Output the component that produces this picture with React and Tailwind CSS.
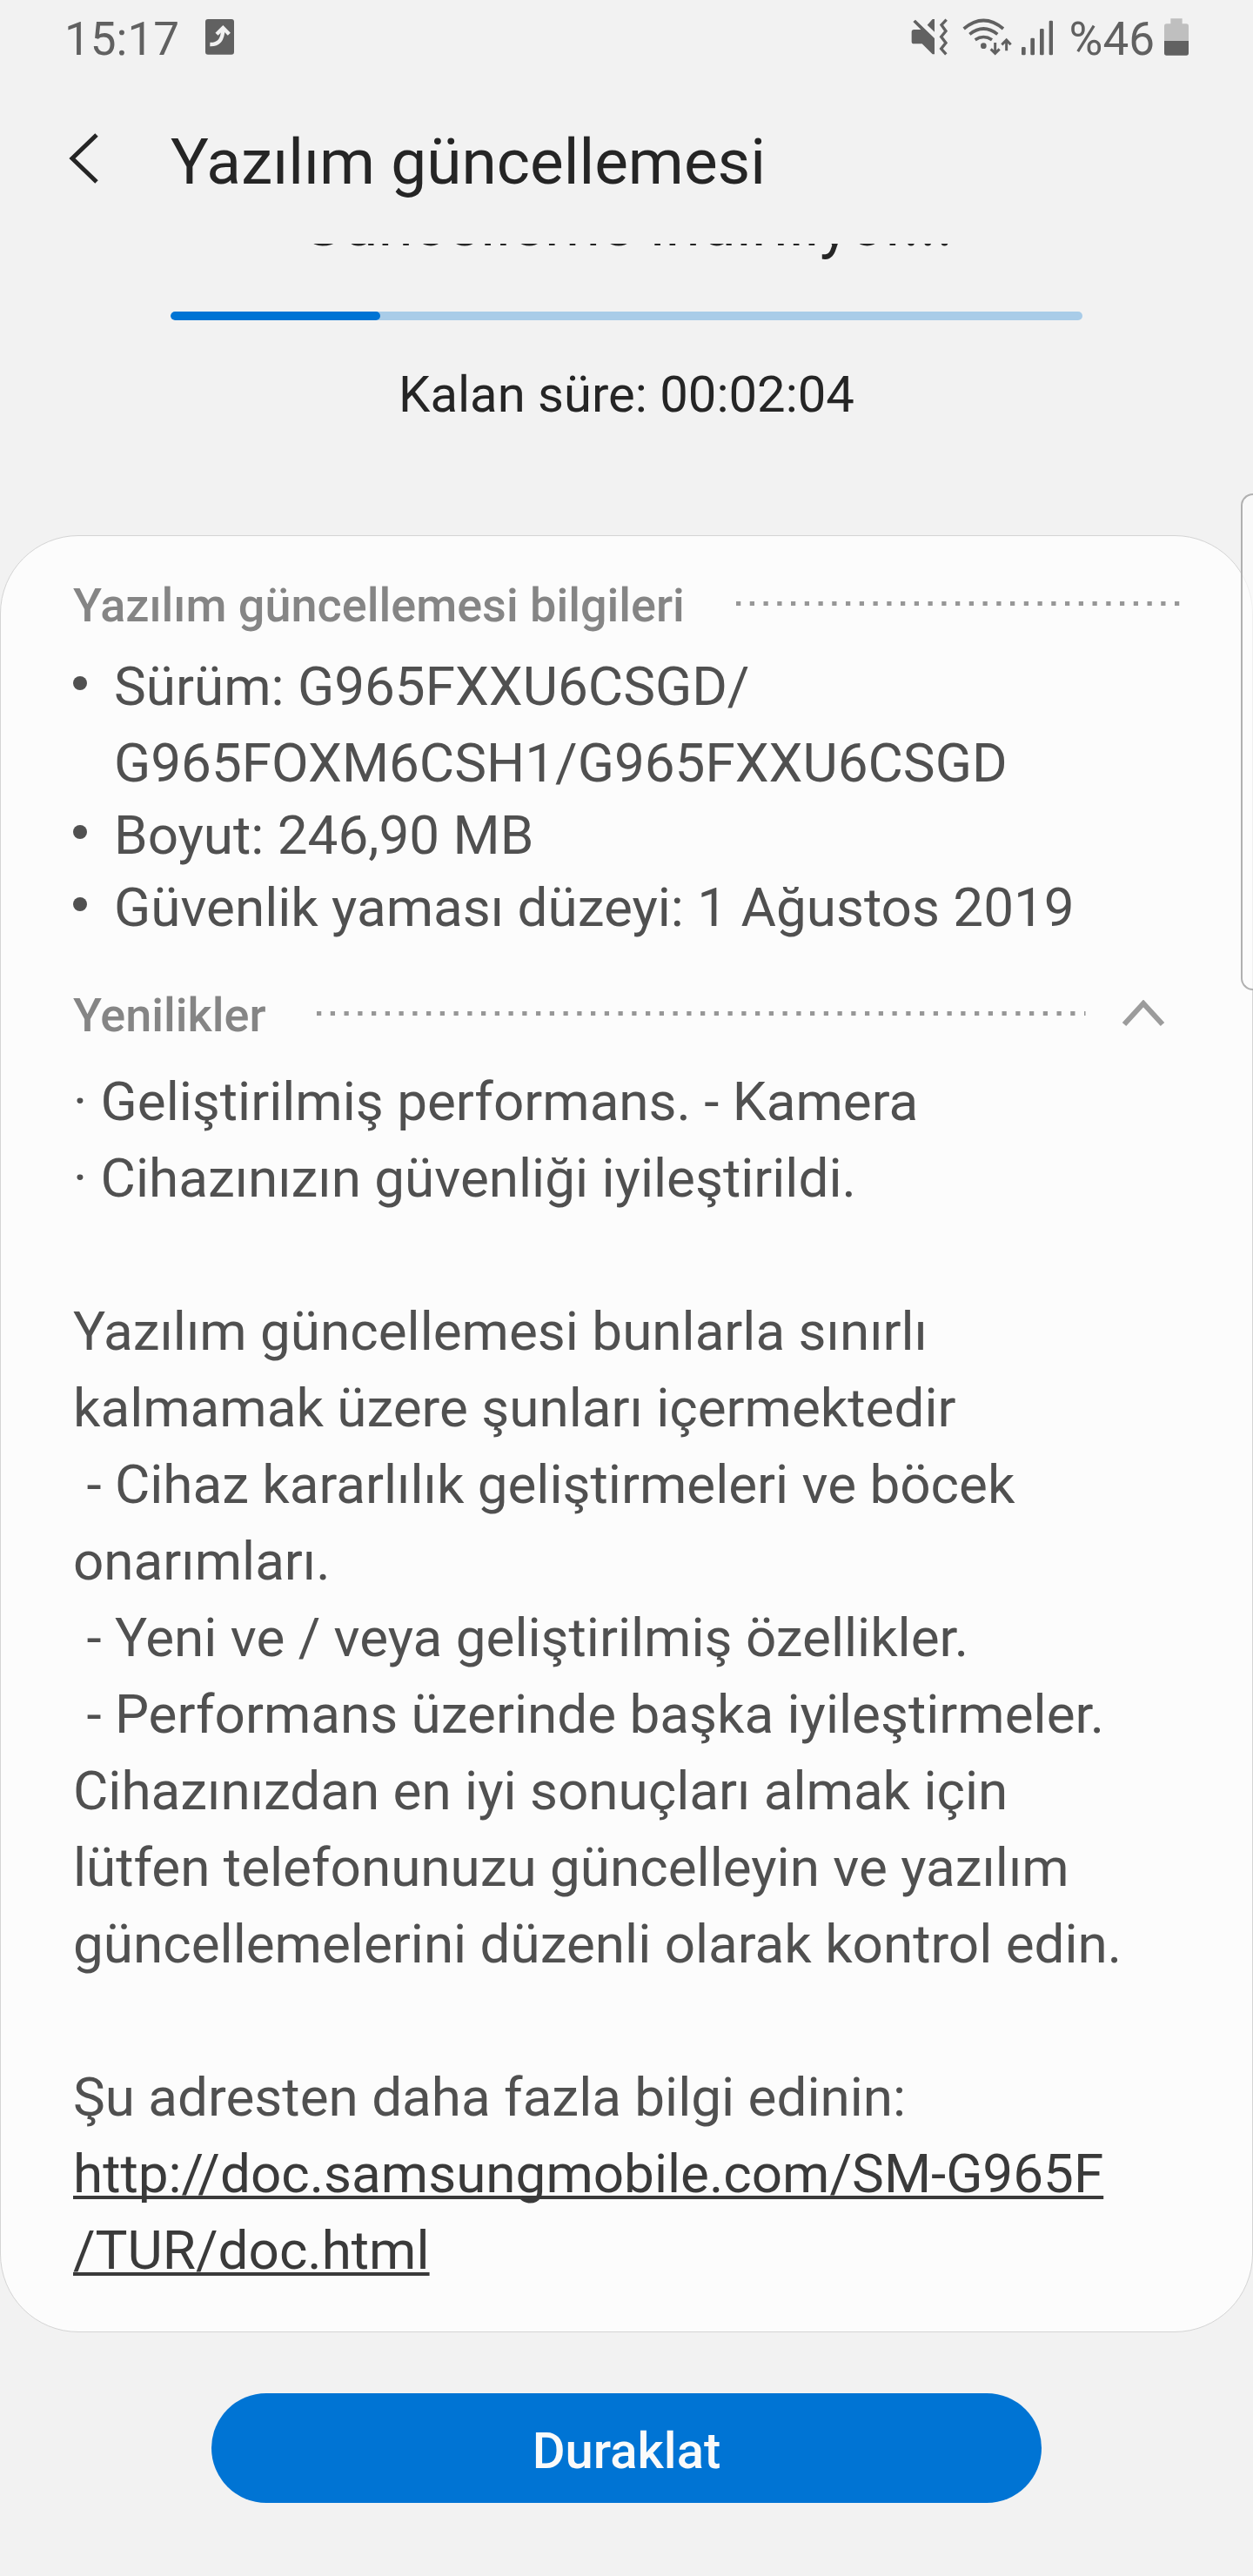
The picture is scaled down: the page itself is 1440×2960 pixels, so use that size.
import React, { useState } from 'react';

const details = [
  'Sürüm: G965FXXU6CSGD/ G965FOXM6CSH1/G965FXXU6CSGD',
  'Boyut: 246,90 MB',
  'Güvenlik yaması düzeyi: 1 Ağustos 2019',
];

const releaseNotes = `· Geliştirilmiş performans. - Kamera
· Cihazınızın güvenliği iyileştirildi.

Yazılım güncellemesi bunlarla sınırlı kalmamak üzere şunları içermektedir
 - Cihaz kararlılık geliştirmeleri ve böcek onarımları.
 - Yeni ve / veya geliştirilmiş özellikler.
 - Performans üzerinde başka iyileştirmeler.
Cihazınızdan en iyi sonuçları almak için lütfen telefonunuzu güncelleyin ve yazılım güncellemelerini düzenli olarak kontrol edin.

Şu adresten daha fazla bilgi edinin:
`;

const ShareBadge = () => (
  <svg className="w-[35px] h-[43px]" viewBox="711 66 105 129" aria-hidden="true">
    <rect x="714" y="69" width="99" height="122" rx="9" fill="#616161" />
    <path d="M730 156 C758 157 774 142 775 104" fill="none" stroke="#f2f2f2" strokeWidth="13" />
    <path d="M753 121 L775 99 L796 121" fill="none" stroke="#f2f2f2" strokeWidth="13" />
  </svg>
);

const MuteIcon = () => (
  <svg className="w-[43px] h-[44px]" viewBox="78 60 129 132" aria-hidden="true">
    <path d="M88 102 H112 L85 75 L93 68 L159 132 V187 H152 L116 151 H88 Q80 151 80 143 V110 Q80 102 88 102 Z" fill="#616161" />
    <path d="M134 86 L152 66 H159 V110 Z" fill="#616161" />
    <path d="M200 68 L183 86 L198 107 L182 127 L198 148 L182 168 L199 187" fill="none" stroke="#616161" strokeWidth="10" />
  </svg>
);

const WifiIcon = () => (
  <svg className="w-[57px] h-[44px]" viewBox="255 60 171 132" aria-hidden="true">
    <g fill="none" stroke="#616161" strokeWidth="11">
      <path d="M260 99 Q328 42 396 99" />
      <path d="M280 118 Q328 80 376 118" />
      <path d="M299 137 Q328 118 357 137" />
      <path d="M368 147 V182 M353 169 L368 184 L383 169" strokeWidth="9" />
      <path d="M407 175 V140 M391 154 L407 138 L422 154" strokeWidth="9" />
    </g>
    <circle cx="328" cy="158" r="10" fill="#616161" />
  </svg>
);

const SignalIcon = () => (
  <svg className="w-[38px] h-[44px]" viewBox="456 60 114 132" fill="#616161" aria-hidden="true">
    <rect x="459" y="162" width="14" height="28" rx="4" />
    <rect x="490" y="131" width="14" height="59" rx="4" />
    <rect x="522" y="99" width="14" height="91" rx="4" />
    <rect x="554" y="71" width="13" height="119" rx="4" />
  </svg>
);

const BatteryIcon = () => (
  <svg className="w-[30px] h-[44px]" viewBox="951 60 90 132" aria-hidden="true">
    <path d="M976 64 H1016 V82 H1030 Q1038 82 1038 90 V141 H954 V90 Q954 82 962 82 H976 Z" fill="#bfbfbf" />
    <path d="M954 141 H1038 V183 Q1038 191 1030 191 H962 Q954 191 954 183 Z" fill="#616161" />
  </svg>
);

const DottedLine = () => (
  <svg className="flex-1 min-w-0 h-[10px]" aria-hidden="true">
    <line x1="0" y1="2.5" x2="100%" y2="2.5" stroke="#979797" strokeWidth="5" strokeDasharray="5.25 10.5" />
  </svg>
);

const StatusBar = () => (
  <div className="flex items-center justify-between h-[84px] pl-[74px] pr-[73px] text-[53px] leading-[60px] text-[#616161]">
    <div className="flex items-center gap-[29px]">
      <span className="pt-[6px]">15:17</span>
      <ShareBadge />
    </div>
    <div className="flex items-center">
      <MuteIcon />
      <span className="ml-4"><WifiIcon /></span>
      <span className="ml-[10px]"><SignalIcon /></span>
      <span className="pt-[6px] ml-[18px] mr-[10px]">%46</span>
      <BatteryIcon />
    </div>
  </div>
);

const App = () => {
  const [paused, setPaused] = useState(false);
  const [expanded, setExpanded] = useState(true);
  const progress = 23;

  return (
    <div className="relative min-h-screen overflow-hidden bg-[#f2f2f2] font-['Roboto',sans-serif] text-[#252525]">
      <StatusBar />

      <header className="flex items-center h-[196px] pl-[76px] pt-2">
        <button type="button" aria-label="Geri" className="w-[40px] h-[68px] mr-[80px]">
          <svg className="w-[40px] h-[68px]" viewBox="0 0 40 68" fill="none" aria-hidden="true">
            <path d="M35 3 L7 30 L35 57" stroke="#252525" strokeWidth="5" />
          </svg>
        </button>
        <h1 className="text-[73px] leading-[84px]">Yazılım güncellemesi</h1>
      </header>

      <main className="overflow-hidden">
        {/* Download status, partly scrolled under the header */}
        <section className="px-[196px] text-center">
          <p className="-mt-[65px] text-[73px] leading-[84px]">Güncelleme indiriliyor...</p>
          <div
            role="progressbar"
            aria-label="İndirme"
            aria-valuenow={progress}
            aria-valuemin={0}
            aria-valuemax={100}
            className="mt-[59px] h-[10px] rounded-full bg-[#a9cce8] overflow-hidden"
          >
            <div className="h-full rounded-full bg-[#0074d4]" style={{ width: `${progress}%` }} />
          </div>
          <p className="mt-[51px] text-[58px] leading-[68px]">Kalan süre: 00:02:04</p>
        </section>

        <section className="mt-[128px] pt-[48px] pb-[49px] px-[83px] rounded-[90px] border border-[#d4d4d4] bg-[#fcfcfc] text-[62px] leading-[88px] text-[#505050]">
          <div className="flex items-center gap-[59px]">
            <h2 className="text-[54px] leading-[64px] font-medium text-[#858585]">Yazılım güncellemesi bilgileri</h2>
            <DottedLine />
          </div>

          <ul className="mt-[17px]">
            {details.map((item) => (
              <li key={item} className="flex -mb-[5px]">
                <span className="w-4 h-4 mt-[32px] mr-[31px] shrink-0 rounded-full bg-[#505050]" />
                <p>{item}</p>
              </li>
            ))}
          </ul>

          <div className="mt-[53px] flex items-center">
            <h2 className="mr-[59px] text-[54px] leading-[64px] font-medium text-[#858585]">Yenilikler</h2>
            <DottedLine />
            <button
              type="button"
              aria-label="Yenilikler"
              aria-expanded={expanded}
              onClick={() => setExpanded(!expanded)}
              className="ml-[40px] mr-[16px] w-[52px] h-[36px]"
            >
              <svg className="w-[52px] h-[36px]" viewBox="0 0 52 36" fill="none" aria-hidden="true">
                <path d="M4 28 L26 4 L48 28" stroke="#9c9c9c" strokeWidth="6" />
              </svg>
            </button>
          </div>

          {expanded && (
            <p className="mt-[23px] pr-[56px] whitespace-pre-wrap">
              {releaseNotes}
              <a
                href="http://doc.samsungmobile.com/SM-G965F/TUR/doc.html"
                className="text-[#3a3a3a] underline decoration-[4px] underline-offset-[4px] [text-decoration-skip-ink:none]"
              >
                http://doc.samsungmobile.com/SM-G965F
                <br />
                /TUR/doc.html
              </a>
            </p>
          )}
        </section>
      </main>

      <footer className="px-[243px] pt-[70px] pb-[84px]">
        <button
          type="button"
          onClick={() => setPaused(!paused)}
          className="w-full h-[126px] pt-[6px] rounded-full bg-[#0074d4] text-[58px] leading-[68px] font-medium text-[#fafafa]"
        >
          {paused ? 'Sürdür' : 'Duraklat'}
        </button>
      </footer>

      {/* Edge panel handle */}
      <div className="absolute right-0 top-[567px] w-[14px] h-[571px] rounded-l-[16px] border-2 border-r-0 border-[#b0b0b0] bg-[#fcfcfc]/70" />
    </div>
  );
};

export default App;
